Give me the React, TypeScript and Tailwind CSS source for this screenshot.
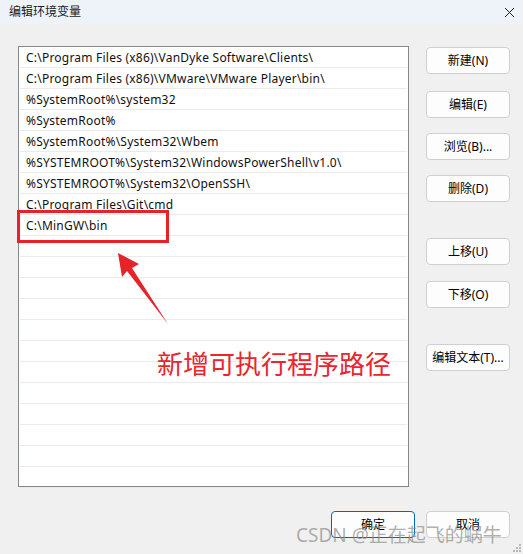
import React from "react";

const paths = [
  "C:\\Program Files (x86)\\VanDyke Software\\Clients\\",
  "C:\\Program Files (x86)\\VMware\\VMware Player\\bin\\",
  "%SystemRoot%\\system32",
  "%SystemRoot%",
  "%SystemRoot%\\System32\\Wbem",
  "%SYSTEMROOT%\\System32\\WindowsPowerShell\\v1.0\\",
  "%SYSTEMROOT%\\System32\\OpenSSH\\",
  "C:\\Program Files\\Git\\cmd",
  "C:\\MinGW\\bin",
];

const rows = [...paths, ...Array(12).fill("")];

const font = { fontFamily: '"Noto Sans", "Noto Sans CJK SC", sans-serif' };

function Btn({ label, className = "", primary = false }: { label: string; className?: string; primary?: boolean }) {
  return (
    <div
      className={
        "w-[84px] h-[27px] rounded-[4px] flex items-center justify-center text-[12px] text-black bg-[#fdfdfd] border " +
        (primary ? "border-[#0067c0]" : "border-[#d0d0d0]") +
        " " +
        className
      }
    >
      {label}
    </div>
  );
}

export default function App() {
  return (
    <div className="relative w-[523px] h-[554px] bg-[#f0f0f0] overflow-hidden" style={font}>
      <div className="h-[24px] bg-[#eef3fa] flex items-center justify-between pl-[9px] pr-[8px]">
        <span className="text-[12px] text-[#1a1a1a] leading-none">编辑环境变量</span>
        <svg width="11" height="11" viewBox="0 0 11 11">
          <path d="M1 1L10 10M10 1L1 10" stroke="#222" strokeWidth="1" />
        </svg>
      </div>

      <div className="flex pl-[18px] pt-[22px]">
        <div className="w-[391px] h-[441px] border border-[#828790] bg-white">
          {rows.map((r, i) => (
            <div
              key={i}
              className="mx-[1px] h-[21px] border-b border-[#ebebeb] pl-[6px] pt-[2px] flex items-center text-[12px] tracking-[0.22px] text-[#111] whitespace-nowrap"
            >
              {r}
            </div>
          ))}
        </div>
        <div className="ml-[17px] flex flex-col">
          <Btn label="新建(N)" className="mt-[1px]" />
          <Btn label="编辑(E)" className="mt-[17px]" />
          <Btn label="浏览(B)..." className="mt-[15px]" />
          <Btn label="删除(D)" className="mt-[15px]" />
          <Btn label="上移(U)" className="mt-[36px]" />
          <Btn label="下移(O)" className="mt-[16px]" />
          <Btn label="编辑文本(T)..." className="mt-[36px]" />
        </div>
      </div>

      <div className="flex justify-end gap-[11px] pr-[13px] mt-[24px]">
        <Btn label="确定" primary />
        <Btn label="取消" />
      </div>

      {/* annotation */}
      <div className="absolute left-[17px] top-[210px] w-[152px] h-[33px] border-[3px] border-[#e8222b]" />
      <svg className="absolute left-0 top-0" width="523" height="554" viewBox="0 0 523 554">
        <polygon points="118,253 139,264 132,268 168,324 127,271 122,277" fill="#e8222b" />
      </svg>
      <div
        className="absolute left-[157px] top-[346px] text-[26px] leading-[34px] text-[#e8262d]"
        style={{ fontFamily: '"Noto Sans CJK SC", sans-serif' }}
      >
        新增可执行程序路径
      </div>
      <div
        className="absolute left-[296px] top-[521px] text-[19px] leading-[28px] text-[#8c8c8c]/70 whitespace-nowrap"
        style={{ fontFamily: '"Noto Sans", "Noto Sans CJK SC", sans-serif' }}
      >
        CSDN @正在起飞的蜗牛
      </div>
      <div className="absolute right-[2px] bottom-[2px] grid grid-cols-3 gap-[1px]">
        {[0, 0, 1, 0, 1, 1, 1, 1, 1].map((v, i) => (
          <div key={i} className={"w-[2px] h-[2px] " + (v ? "bg-[#b8b8b8]" : "bg-transparent")} />
        ))}
      </div>
    </div>
  );
}
